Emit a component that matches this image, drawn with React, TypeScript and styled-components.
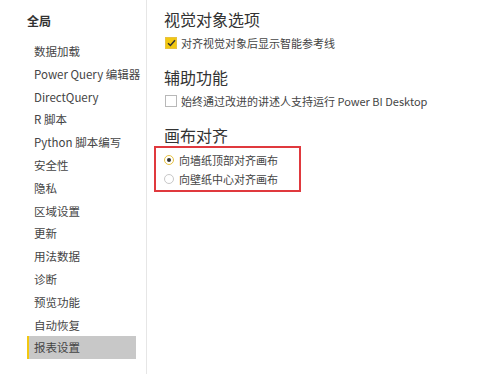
import styled, { createGlobalStyle } from 'styled-components'

const Global = createGlobalStyle`
  * { margin: 0; padding: 0; box-sizing: border-box; }
  html, body { width: 499px; height: 374px; background: #fff; overflow: hidden; }
  body { font-family: "Noto Sans CJK SC", "Noto Sans", sans-serif; color: #444; }
`

const Page = styled.div`
  display: flex;
  height: 374px;
`

const Sidebar = styled.div`
  width: 147px;
  border-right: 1px solid #e6e6e6;
  padding: 10px 10px 0 27px;
  display: flex;
  flex-direction: column;
`

const GroupTitle = styled.div`
  font-size: 12px;
  font-weight: bold;
  color: #333;
  height: 22px;
  line-height: 22px;
  margin-bottom: 8px;
`

const NavItem = styled.div<{ $active?: boolean }>`
  font-size: 11.5px;
  height: 22.8px;
  line-height: 22.8px;
  white-space: nowrap;
  padding-left: ${p => (p.$active ? '5px' : '7px')};
  color: #444;
  background: ${p => (p.$active ? '#c8c8c8' : 'transparent')};
  border-left: ${p => (p.$active ? '2px solid #f2c811' : 'none')};
`

const Content = styled.div`
  padding: 8px 0 0 17px;
  flex: 1;
`

const Heading = styled.div`
  font-size: 16px;
  height: 22px;
  line-height: 22px;
  color: #333;
  margin-bottom: 3px;
`

const Option = styled.label`
  display: flex;
  align-items: center;
  font-size: 11px;
  height: 19px;
  color: #444;
`

const Section = styled.div`
  margin-bottom: 14px;
`

const Box = styled.span<{ $checked?: boolean }>`
  width: 12px;
  height: 12px;
  margin: 0 4px 0 1px;
  border: 1px solid ${p => (p.$checked ? '#e8c240' : '#b8b8b8')};
  background: ${p => (p.$checked ? '#f2c811' : '#fff')};
  display: flex;
  align-items: center;
  justify-content: center;
`

const Radio = styled.span<{ $checked?: boolean }>`
  width: 10px;
  height: 10px;
  margin: 0 5px 0 0;
  border-radius: 50%;
  border: 1px solid ${p => (p.$checked ? '#e8c240' : '#c8c8c8')};
  display: flex;
  align-items: center;
  justify-content: center;
  &::after {
    content: '';
    width: 4px;
    height: 4px;
    border-radius: 50%;
    background: ${p => (p.$checked ? '#333' : 'transparent')};
  }
`

const Highlight = styled.div`
  border: 2px solid #e0393e;
  width: 147px;
  margin: -3px 0 0 -10px;
  padding: 2px 0 2px 8px;
`

const navItems = [
  '数据加载',
  'Power Query 编辑器',
  'DirectQuery',
  'R 脚本',
  'Python 脚本编写',
  '安全性',
  '隐私',
  '区域设置',
  '更新',
  '用法数据',
  '诊断',
  '预览功能',
  '自动恢复',
  '报表设置',
]

const App = () => {
  return (
    <>
      <Global />
      <Page>
        <Sidebar>
          <GroupTitle>全局</GroupTitle>
          {navItems.map(n => (
            <NavItem key={n} $active={n === '报表设置'}>
              {n}
            </NavItem>
          ))}
        </Sidebar>
        <Content>
          <Section>
            <Heading>视觉对象选项</Heading>
            <Option>
              <Box $checked>
                <svg width="9" height="8" viewBox="0 0 9 8">
                  <path d="M1 4.2 L3.4 6.5 L8 1.2" fill="none" stroke="#333" strokeWidth="1.5" />
                </svg>
              </Box>
              对齐视觉对象后显示智能参考线
            </Option>
          </Section>
          <Section>
            <Heading>辅助功能</Heading>
            <Option>
              <Box />
              始终通过改进的讲述人支持运行 Power BI Desktop
            </Option>
          </Section>
          <Heading>画布对齐</Heading>
          <Highlight>
            <Option>
              <Radio $checked />
              向墙纸顶部对齐画布
            </Option>
            <Option>
              <Radio />
              向壁纸中心对齐画布
            </Option>
          </Highlight>
        </Content>
      </Page>
    </>
  )
}

export default App
